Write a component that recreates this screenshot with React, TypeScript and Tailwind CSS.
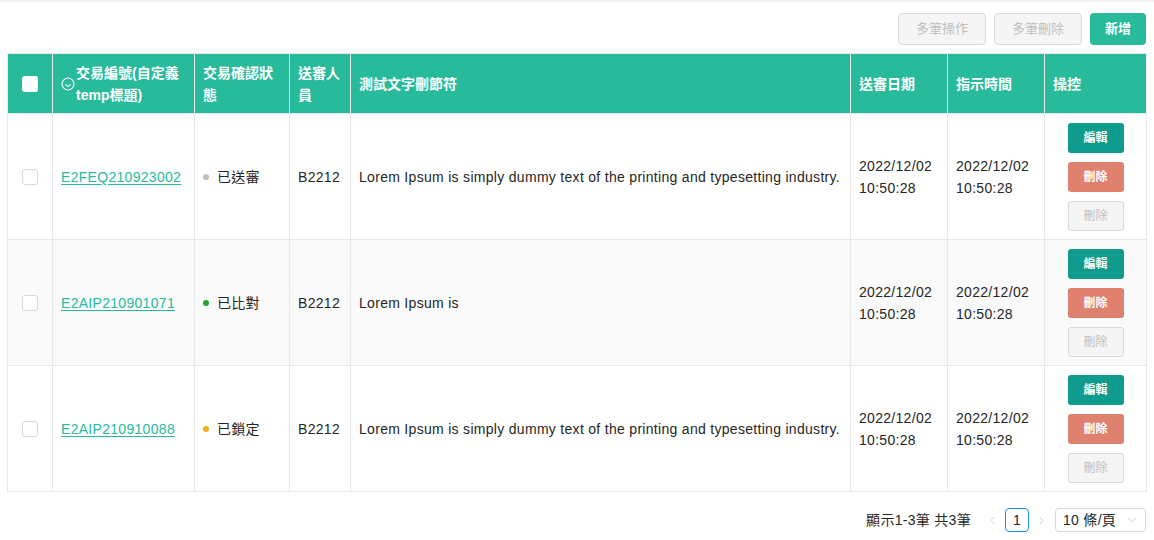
import React from "react";
import { ChevronDown, ChevronLeft, ChevronRight } from "lucide-react";

type Row = {
  id: string;
  status: string;
  dot: string;
  user: string;
  text: string;
  date: string;
  time: string;
  striped?: boolean;
};

const LONG = "Lorem Ipsum is simply dummy text of the printing and typesetting industry.";

const rows: Row[] = [
  { id: "E2FEQ210923002", status: "已送審", dot: "bg-[#bfbfbf]", user: "B2212", text: LONG, date: "2022/12/02", time: "10:50:28" },
  { id: "E2AIP210901071", status: "已比對", dot: "bg-[#1aa82c]", user: "B2212", text: "Lorem Ipsum is", date: "2022/12/02", time: "10:50:28", striped: true },
  { id: "E2AIP210910088", status: "已鎖定", dot: "bg-[#faad14]", user: "B2212", text: LONG, date: "2022/12/02", time: "10:50:28" },
];

const SmileIcon = () => (
  <svg width="14" height="14" viewBox="0 0 16 16" fill="none" stroke="white" strokeWidth="1.2" className="shrink-0">
    <circle cx="8" cy="8" r="6.8" />
    <path d="M5.3 8.4c.6 1.4 1.5 2 2.7 2s2.1-.6 2.7-2" strokeLinecap="round" />
  </svg>
);

const th = "border border-[#e8e8e8] px-[8px] text-left align-middle text-[14px] font-bold leading-[22px] text-white";
const td = "border border-[#e8e8e8] px-[8px] align-middle text-[14px] leading-[22px] tracking-[0.3px] text-[#262626]";

const ActionButtons = () => (
  <div className="flex flex-col items-center gap-[9px]">
    <button className="h-[30px] w-[56px] rounded-[3px] bg-[#0f9b8e] text-[12px] font-bold text-white">編輯</button>
    <button className="h-[30px] w-[56px] rounded-[3px] bg-[#e0806f] text-[12px] font-bold text-white">刪除</button>
    <button className="h-[30px] w-[56px] rounded-[3px] border border-[#d9d9d9] bg-[#f5f5f5] text-[12px] text-[#bfbfbf]">刪除</button>
  </div>
);

export default function App() {
  return (
    <div
      className="min-h-[540px] w-[1154px] border-t-2 border-[#f4f4f4] bg-white pl-[7px] pr-[8px]"
      style={{ fontFamily: '"Liberation Sans", "Noto Sans CJK TC", sans-serif' }}
    >
      <div className="flex justify-end gap-[8px] pt-[11px]">
        <button className="h-[32px] w-[88px] rounded-[4px] border border-[#d9d9d9] bg-[#f5f5f5] text-[13px] text-[#bfbfbf]">多筆操作</button>
        <button className="h-[32px] w-[88px] rounded-[4px] border border-[#d9d9d9] bg-[#f5f5f5] text-[13px] text-[#bfbfbf]">多筆刪除</button>
        <button className="h-[32px] w-[56px] rounded-[4px] bg-[#27bb9c] text-[13px] font-semibold text-white">新增</button>
      </div>

      <table className="mt-[8px] w-[1139px] table-fixed border-collapse">
        <colgroup>
          <col className="w-[45px]" />
          <col className="w-[142px]" />
          <col className="w-[95px]" />
          <col className="w-[61px]" />
          <col className="w-[500px]" />
          <col className="w-[97px]" />
          <col className="w-[97px]" />
          <col className="w-[102px]" />
        </colgroup>
        <thead>
          <tr className="h-[60px] bg-[#27bb9c]">
            <th className={th}>
              <div className="flex justify-center">
                <span className="block h-[16px] w-[16px] rounded-[3px] bg-white" />
              </div>
            </th>
            <th className={th}>
              <div className="flex items-center gap-[1px]">
                <SmileIcon />
                <span>交易編號(自定義temp標題)</span>
              </div>
            </th>
            <th className={th}>交易確認狀態</th>
            <th className={th}>送審人員</th>
            <th className={th}>測試文字刪節符</th>
            <th className={th}>送審日期</th>
            <th className={th}>指示時間</th>
            <th className={th}>操控</th>
          </tr>
        </thead>
        <tbody>
          {rows.map((r) => (
            <tr key={r.id} className={r.striped ? "h-[126px] bg-[#fafafa]" : "h-[126px] bg-white"}>
              <td className={td}>
                <div className="flex justify-center">
                  <span className="block h-[16px] w-[16px] rounded-[3px] border border-[#d9d9d9] bg-white" />
                </div>
              </td>
              <td className={td}>
                <a href="#" className="text-[#27bb9c] underline underline-offset-2">{r.id}</a>
              </td>
              <td className={td}>
                <div className="flex items-center gap-[8px]">
                  <span className={`block h-[6px] w-[6px] rounded-full ${r.dot}`} />
                  <span>{r.status}</span>
                </div>
              </td>
              <td className={td}>{r.user}</td>
              <td className={td}>{r.text}</td>
              <td className={td}>
                <div>{r.date}</div>
                <div>{r.time}</div>
              </td>
              <td className={td}>
                <div>{r.date}</div>
                <div>{r.time}</div>
              </td>
              <td className="border border-[#e8e8e8] py-[8px] align-middle">
                <ActionButtons />
              </td>
            </tr>
          ))}
        </tbody>
      </table>

      <div className="mt-[16px] flex items-center justify-end text-[14px] tracking-[0.3px] text-[#262626]">
        <span className="mr-[15px]">顯示1-3筆 共3筆</span>
        <ChevronLeft size={13} className="mr-[6px] text-[#c4c4c4]" strokeWidth={1.5} />
        <span className="flex h-[24px] w-[24px] items-center justify-center rounded-[4px] border border-[#1890ff] text-[14px]">1</span>
        <ChevronRight size={13} className="ml-[6px] text-[#c4c4c4]" strokeWidth={1.5} />
        <div className="ml-[7px] flex h-[24px] w-[91px] items-center justify-between rounded-[4px] border border-[#d9d9d9] pl-[7px] pr-[6px]">
          <span>10 條/頁</span>
          <ChevronDown size={14} className="text-[#c4c4c4]" strokeWidth={1.3} />
        </div>
      </div>
    </div>
  );
}
